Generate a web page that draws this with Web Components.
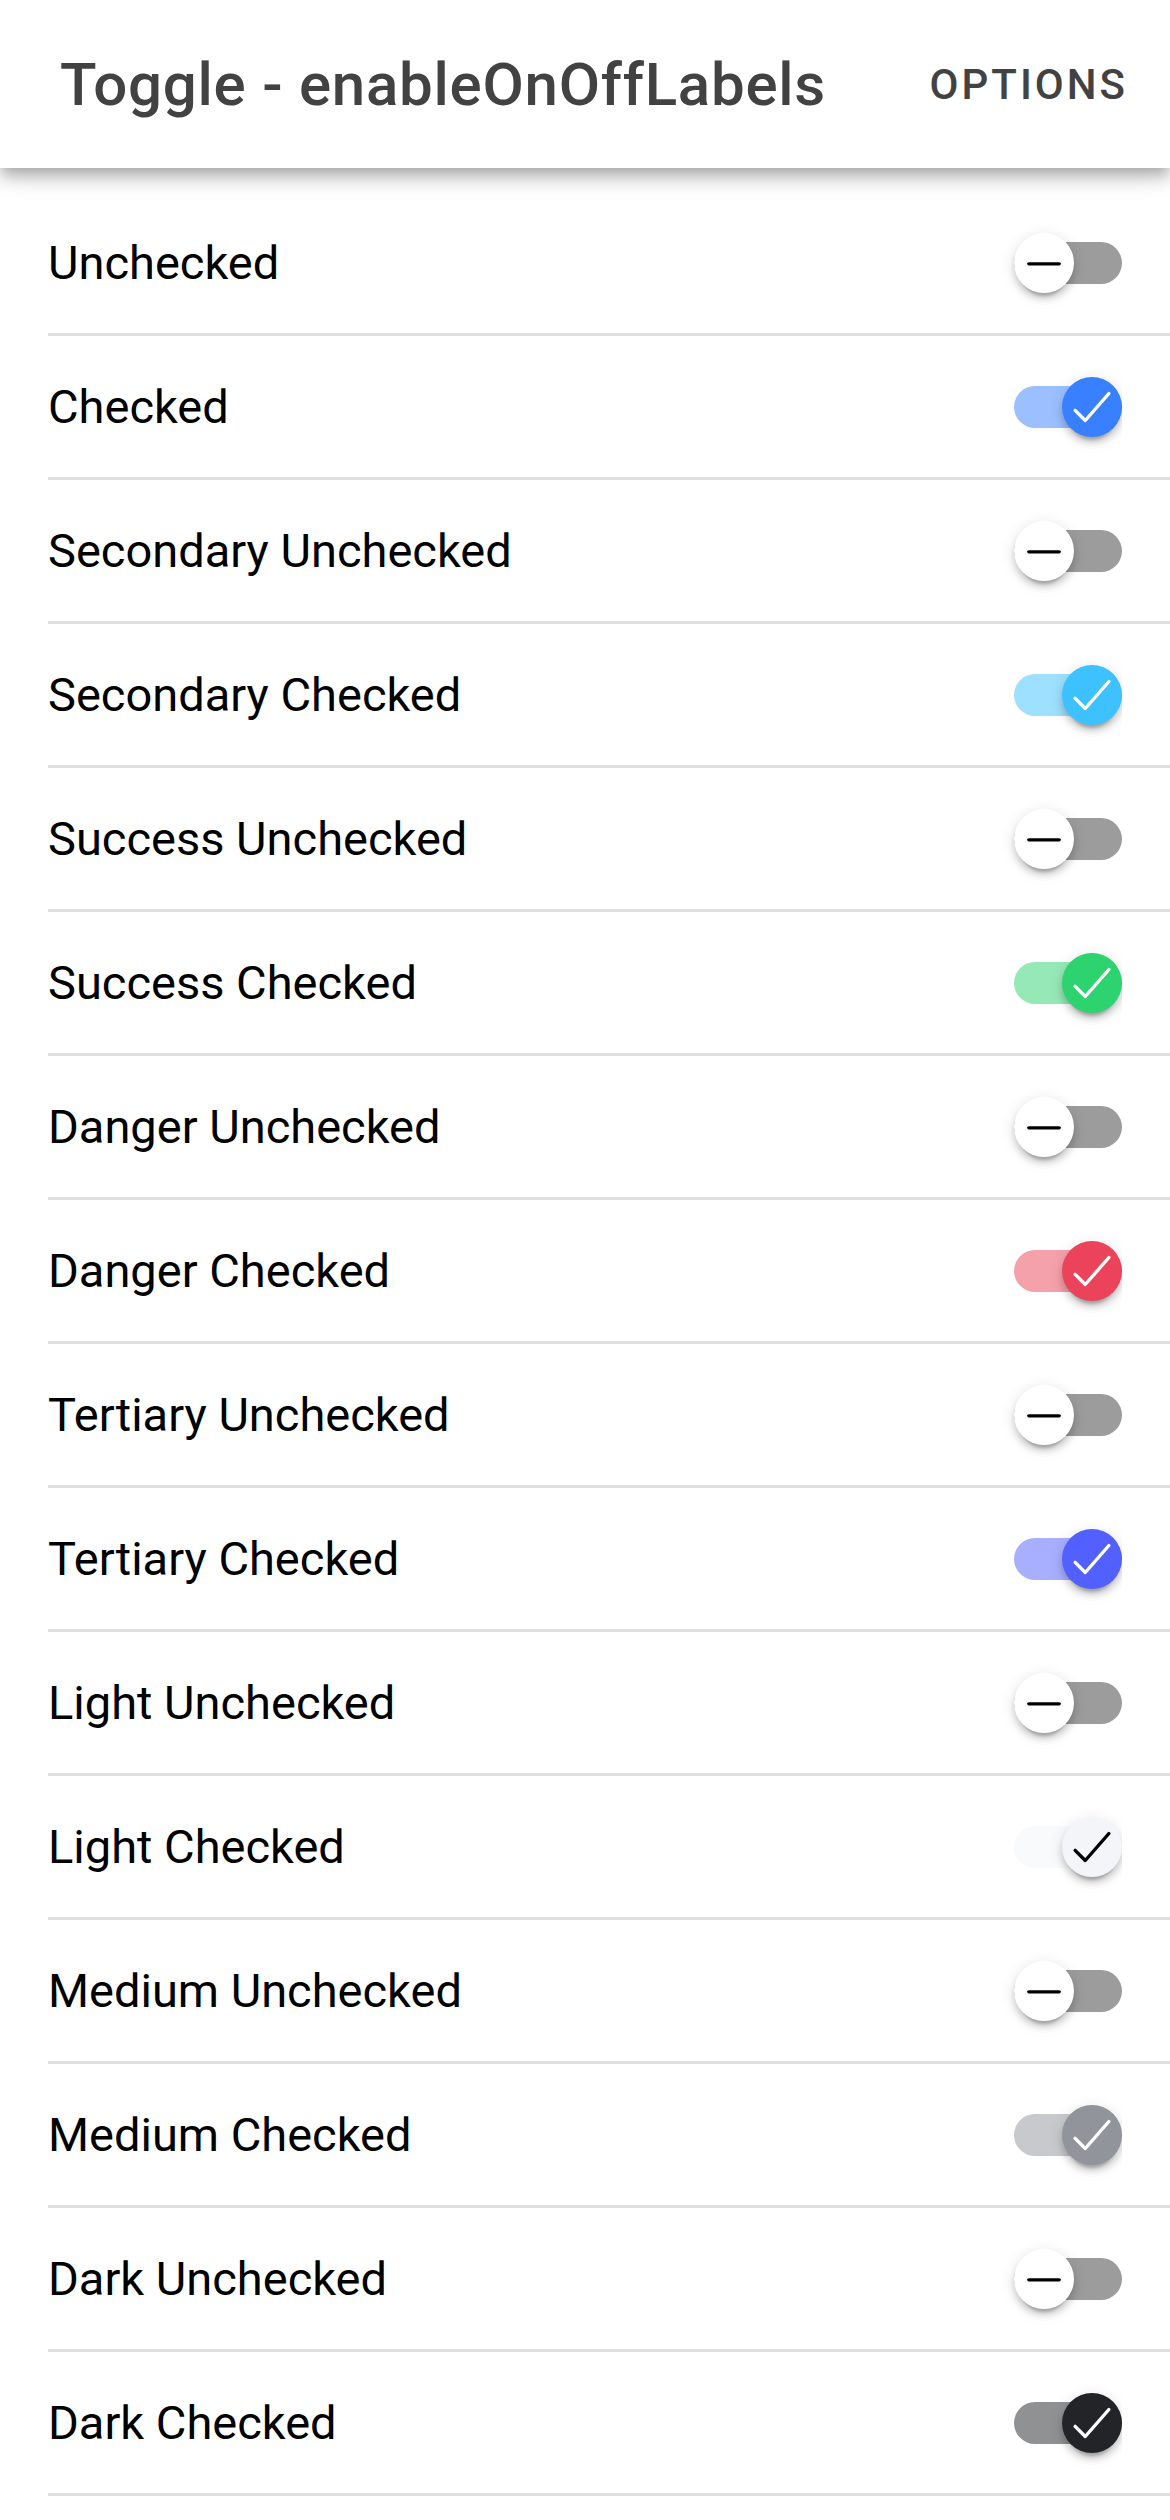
<!DOCTYPE html>
<html lang="en">
<head>
<meta charset="utf-8">
<meta name="viewport" content="width=device-width, initial-scale=1">
<title>Toggle - enableOnOffLabels</title>
<style>
  body { margin: 0; background: #fff; color: #000; font-family: Roboto, sans-serif; }
</style>
</head>
<body>
<app-header>
  Toggle - enableOnOffLabels
  <toolbar-button slot="end">Options</toolbar-button>
</app-header>
<main>
  <toggle-list>
    <toggle-item>Unchecked</toggle-item>
    <toggle-item checked>Checked</toggle-item>
    <toggle-item color="secondary">Secondary Unchecked</toggle-item>
    <toggle-item color="secondary" checked>Secondary Checked</toggle-item>
    <toggle-item color="success">Success Unchecked</toggle-item>
    <toggle-item color="success" checked>Success Checked</toggle-item>
    <toggle-item color="danger">Danger Unchecked</toggle-item>
    <toggle-item color="danger" checked>Danger Checked</toggle-item>
    <toggle-item color="tertiary">Tertiary Unchecked</toggle-item>
    <toggle-item color="tertiary" checked>Tertiary Checked</toggle-item>
    <toggle-item color="light">Light Unchecked</toggle-item>
    <toggle-item color="light" checked>Light Checked</toggle-item>
    <toggle-item color="medium">Medium Unchecked</toggle-item>
    <toggle-item color="medium" checked>Medium Checked</toggle-item>
    <toggle-item color="dark">Dark Unchecked</toggle-item>
    <toggle-item color="dark" checked>Dark Checked</toggle-item>
  </toggle-list>
</main>

<script>
  const define = (name, html, setup) => {
    const template = document.createElement('template');
    template.innerHTML = html;
    customElements.define(name, class extends HTMLElement {
      constructor() {
        super();
        this.attachShadow({ mode: 'open' }).append(template.content.cloneNode(true));
      }
      connectedCallback() {
        if (setup) setup(this);
      }
    });
  };

  define('app-header', `
    <style>
      :host { display: block; }
      header {
        display: flex; align-items: center; min-height: 168px; box-sizing: border-box;
        padding: 2px 12px 0; background: #fff; color: #424242;
        box-shadow: 0 6px 12px -3px rgba(0,0,0,.2), 0 12px 15px 0 rgba(0,0,0,.14), 0 3px 30px 0 rgba(0,0,0,.12);
      }
      h1 {
        flex: 1; min-width: 0; margin: 0; padding: 0 48px; font-size: 60px; line-height: 72px;
        font-weight: 500; letter-spacing: 0.0125em;
        white-space: nowrap;
      }
    </style>
    <header><h1><slot></slot></h1><slot name="end"></slot></header>`);

  define('toolbar-button', `
    <style>
      :host { display: block; flex: none; }
      button {
        display: block; margin: 0 6px; padding: 0 24px; height: 96px; border: 0;
        background: transparent; color: inherit; font: 500 42px/48px Roboto, sans-serif;
        letter-spacing: 3px; text-transform: uppercase; cursor: pointer;
      }
    </style>
    <button type="button"><slot></slot></button>`);

  define('toggle-list', `
    <style>
      :host { display: flex; flex-direction: column; padding: 24px 0; }
    </style>
    <slot></slot>`);

  define('toggle-item', `
    <style>
      :host { display: block; padding-left: 48px; --tone: #3880ff; --mark: #fff; }
      :host([color=secondary]) { --tone: #3dc2ff; }
      :host([color=success]) { --tone: #2dd36f; }
      :host([color=danger]) { --tone: #eb445a; }
      :host([color=tertiary]) { --tone: #5260ff; }
      :host([color=light]) { --tone: #f4f5f8; --mark: #000; }
      :host([color=medium]) { --tone: #92949c; }
      :host([color=dark]) { --tone: #222428; }
      label {
        display: flex; align-items: center; justify-content: space-between; gap: 48px;
        min-height: 144px; box-sizing: border-box; padding: 1px 48px 0 0;
        border-bottom: 3px solid #dedede; font-size: 47px; line-height: 56px; cursor: pointer;
      }
      .toggle {
        flex: none; display: grid; align-items: center; width: 108px; height: 60px;
        clip-path: inset(-24px 0 -24px -24px);
      }
      .toggle > * { grid-area: 1 / 1; }
      input {
        appearance: none; margin: 0; width: 108px; height: 42px; border-radius: 42px;
        background: rgba(0,0,0,.39); cursor: inherit;
      }
      input:checked { background: color-mix(in srgb, var(--tone) 50%, transparent); }
      .knob {
        display: grid; place-items: center; width: 60px; height: 60px; border-radius: 50%;
        background: #fff; color: #000; pointer-events: none;
        box-shadow: 0 9px 3px -6px rgba(0,0,0,.2), 0 6px 6px 0 rgba(0,0,0,.14), 0 3px 15px 0 rgba(0,0,0,.12);
      }
      input:checked + .knob { justify-self: end; background: var(--tone); color: var(--mark); }
      svg {
        width: 54px; height: 54px; fill: none; stroke: currentColor; stroke-width: 32;
        stroke-linecap: round; stroke-linejoin: round;
      }
      .on, input:checked + .knob .off { display: none; }
      input:checked + .knob .on { display: inline; }
    </style>
    <label>
      <span><slot></slot></span>
      <span class="toggle">
        <input type="checkbox" role="switch">
        <span class="knob">
          <svg viewBox="0 0 512 512" aria-hidden="true">
            <path class="off" d="M400 264H112"/>
            <path class="on" d="M416 128 192 384 96 288"/>
          </svg>
        </span>
      </span>
    </label>`,
    el => { el.shadowRoot.querySelector('input').checked = el.hasAttribute('checked'); });
</script>
</body>
</html>
